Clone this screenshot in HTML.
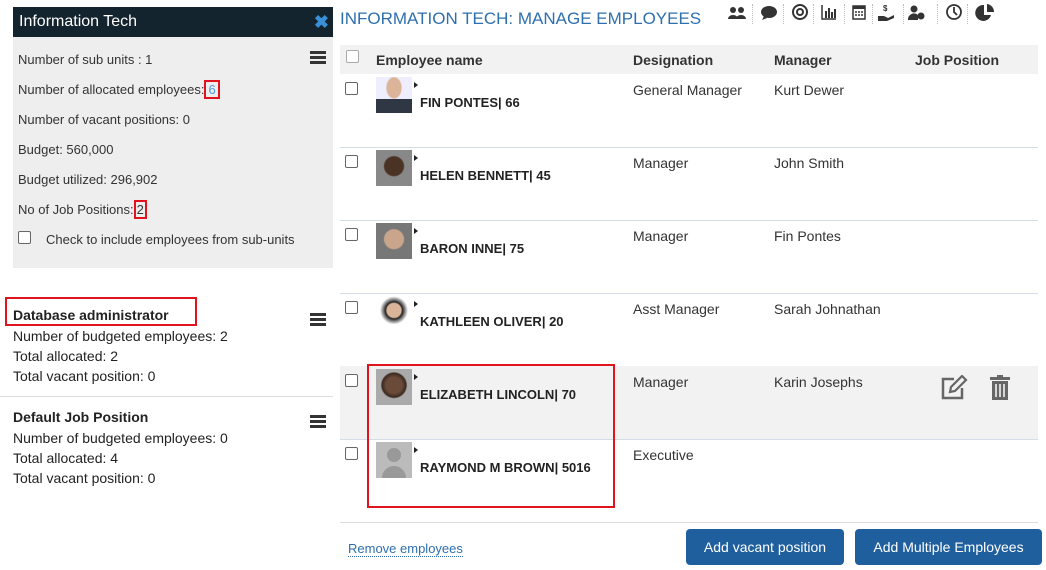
<!DOCTYPE html>
<html><head><style>
body{margin:0;width:1046px;height:570px;background:#fff;font-family:"Liberation Sans",sans-serif;color:#333;position:relative;overflow:hidden}
.a{position:absolute}
.lp{left:13px;top:7px;width:320px;height:261px;background:#eee}
.hd{left:13px;top:7px;width:320px;height:30px;background:#13242e;color:#fff;font-size:16px;line-height:30px}
.li{left:18px;font-size:13px;color:#333}
.box{border:2px solid #e0141e}
.bm{width:16px;height:3px;background:#333;box-shadow:0 5px #333,0 10px #333}
.jp{left:13px;font-size:14px;color:#222}
.th{left:340px;top:45px;width:698px;height:29px;background:#f2f2f2;font-weight:bold;font-size:14px;color:#333}
.row{left:340px;width:698px;height:73px;border-bottom:1px solid #d5dde8}
.cb{width:11px;height:11px;border:1px solid #666;border-radius:2px;background:#fff}
.nm{font-weight:bold;font-size:13px;color:#222}
.c{font-size:14px;color:#333}
.btn{top:529px;height:36px;background:#1f5f9e;color:#fff;font-size:14px;line-height:36px;text-align:center;border-radius:4px}
.ph{width:36px;height:36px}
.tri{width:0;height:0;border-left:4px solid #222;border-top:3px solid transparent;border-bottom:3px solid transparent}
.sep{top:4px;width:0;height:20px;border-left:1px dotted #bbb}
</style></head><body>
<div class="a lp"></div>
<div class="a hd"><span style="margin-left:6px">Information Tech</span><span style="position:absolute;right:4px;top:0;color:#3a8fd6;font-weight:bold;font-size:18px">✖</span></div>
<div class="a bm" style="left:310px;top:51px"></div>
<div class="a li" style="top:52px">Number of sub units : 1</div>
<div class="a li" style="top:82px">Number of allocated employees:<span class="box" style="color:#4a9ad8;padding:0 2px">6</span></div>
<div class="a li" style="top:112px">Number of vacant positions: 0</div>
<div class="a li" style="top:142px">Budget: 560,000</div>
<div class="a li" style="top:172px">Budget utilized: 296,902</div>
<div class="a li" style="top:202px">No of Job Positions:<span class="box" style="padding:0 1px">2</span></div>
<div class="a cb" style="left:18px;top:231px"></div>
<div class="a li" style="left:46px;top:232px">Check to include employees from sub-units</div>

<div class="a box" style="left:5px;top:297px;width:188px;height:25px"></div>
<div class="a jp" style="top:307px;font-weight:bold">Database administrator</div>
<div class="a bm" style="left:310px;top:313px"></div>
<div class="a jp" style="top:328px">Number of budgeted employees: 2</div>
<div class="a jp" style="top:348px">Total allocated: 2</div>
<div class="a jp" style="top:368px">Total vacant position: 0</div>
<div class="a" style="left:0;top:396px;width:333px;height:1px;background:#ddd"></div>
<div class="a jp" style="top:409px;font-weight:bold">Default Job Position</div>
<div class="a bm" style="left:310px;top:415px"></div>
<div class="a jp" style="top:430px">Number of budgeted employees: 0</div>
<div class="a jp" style="top:450px">Total allocated: 4</div>
<div class="a jp" style="top:470px">Total vacant position: 0</div>

<div class="a" style="left:340px;top:9px;font-size:17px;color:#2e6fae">INFORMATION TECH: MANAGE EMPLOYEES</div>
<svg class="a" style="left:726px;top:2px" width="270" height="24" viewBox="0 0 270 24" fill="#333">
<circle cx="7" cy="8" r="3"/><circle cx="15" cy="8" r="3"/><path d="M2 17a5 4 0 0 1 10 0zM10 17a5 4 0 0 1 10 0z"/>
<ellipse cx="43" cy="10" rx="8" ry="6"/><path d="M38 14l-2 4 5-2z"/>
<circle cx="74" cy="10" r="7" fill="none" stroke="#333" stroke-width="2"/><circle cx="74" cy="10" r="3" fill="none" stroke="#333" stroke-width="2"/>
<path d="M96 3v14h14" fill="none" stroke="#333" stroke-width="1.5"/><rect x="99" y="9" width="2" height="7"/><rect x="102" y="6" width="2" height="10"/><rect x="105" y="10" width="2" height="6"/><rect x="108" y="7" width="2" height="9"/>
<rect x="127" y="4" width="12" height="13" fill="none" stroke="#333" stroke-width="1.5"/><rect x="127" y="4" width="12" height="3"/><path d="M129 10h2M132 10h2M135 10h2M129 13h2M132 13h2M135 13h2" stroke="#333" stroke-width="1.5"/>
<text x="157" y="9" font-size="8" font-weight="bold" font-family="Liberation Sans">$</text><path d="M152 14h6l4 2 6-3v3l-7 3h-9z"/>
<circle cx="188" cy="7" r="3.5"/><path d="M182 18a6 6 0 0 1 10-5v5z"/><circle cx="195" cy="14" r="3.5"/>
<circle cx="228" cy="10" r="7" fill="none" stroke="#333" stroke-width="1.8"/><path d="M228 5v5l3 3" fill="none" stroke="#333" stroke-width="1.8"/>
<path d="M258 3a8 8 0 1 0 7 10h-7z"/><path d="M261 2v8h7a8 8 0 0 0-7-8z"/>
</svg>
<div class="a sep" style="left:752px"></div><div class="a sep" style="left:783px"></div><div class="a sep" style="left:813px"></div><div class="a sep" style="left:844px"></div><div class="a sep" style="left:872px"></div><div class="a sep" style="left:903px"></div><div class="a sep" style="left:937px"></div><div class="a sep" style="left:967px"></div>

<div class="a th"><div class="a cb" style="left:6px;top:5px;border-color:#aaa"></div><span class="a" style="left:36px;top:7px">Employee name</span><span class="a" style="left:293px;top:7px">Designation</span><span class="a" style="left:434px;top:7px">Manager</span><span class="a" style="left:575px;top:7px">Job Position</span></div>

<div class="a row" style="top:74px"></div>
<div class="a row" style="top:147px"></div>
<div class="a row" style="top:220px"></div>
<div class="a row" style="top:293px"></div>
<div class="a row" style="top:366px;background:#f2f2f2"></div>
<div class="a row" style="top:439px;height:83px;border-bottom:1px solid #ddd"></div>

<div class="a cb" style="left:345px;top:82px"></div><div class="a ph" style="left:376px;top:77px;background:radial-gradient(ellipse at 50% 30%,#dcb49a 28%,#eef 32%),#eef"><div style="position:absolute;bottom:0;left:0;width:36px;height:14px;background:#2f3745"></div></div><div class="a tri" style="left:414px;top:82px"></div><div class="a nm" style="left:420px;top:95px">FIN PONTES| 66</div><div class="a c" style="left:633px;top:82px">General Manager</div><div class="a c" style="left:774px;top:82px">Kurt Dewer</div>
<div class="a cb" style="left:345px;top:155px"></div><div class="a ph" style="left:376px;top:150px;background:radial-gradient(circle at 50% 45%,#4a3225 35%,#888 40%)"></div><div class="a tri" style="left:414px;top:155px"></div><div class="a nm" style="left:420px;top:168px">HELEN BENNETT| 45</div><div class="a c" style="left:633px;top:155px">Manager</div><div class="a c" style="left:774px;top:155px">John Smith</div>
<div class="a cb" style="left:345px;top:228px"></div><div class="a ph" style="left:376px;top:223px;background:radial-gradient(circle at 50% 45%,#c9a58c 35%,#777 40%)"></div><div class="a tri" style="left:414px;top:228px"></div><div class="a nm" style="left:420px;top:241px">BARON INNE| 75</div><div class="a c" style="left:633px;top:228px">Manager</div><div class="a c" style="left:774px;top:228px">Fin Pontes</div>
<div class="a cb" style="left:345px;top:301px"></div><div class="a ph" style="left:376px;top:296px;background:radial-gradient(circle at 50% 40%,#d9b498 25%,#222 30%,#fff 50%)"></div><div class="a tri" style="left:414px;top:301px"></div><div class="a nm" style="left:420px;top:314px">KATHLEEN OLIVER| 20</div><div class="a c" style="left:633px;top:301px">Asst Manager</div><div class="a c" style="left:774px;top:301px">Sarah Johnathan</div>
<div class="a cb" style="left:345px;top:374px"></div><div class="a ph" style="left:376px;top:369px;background:radial-gradient(circle at 50% 45%,#6a4a38 30%,#3a2a20 45%,#aaa 50%)"></div><div class="a tri" style="left:414px;top:374px"></div><div class="a nm" style="left:420px;top:387px">ELIZABETH LINCOLN| 70</div><div class="a c" style="left:633px;top:374px">Manager</div><div class="a c" style="left:774px;top:374px">Karin Josephs</div>
<svg class="a" style="left:940px;top:375px" width="28" height="26" viewBox="0 0 28 26"><path d="M14 4H3v19h19V13" fill="none" stroke="#666" stroke-width="2.5"/><path d="M10 17l1-5L22 1l4 4-11 11z" fill="none" stroke="#666" stroke-width="2.2"/></svg>
<svg class="a" style="left:989px;top:375px" width="22" height="26" viewBox="0 0 22 26"><rect x="1" y="2" width="20" height="3" fill="#666"/><rect x="8" y="0" width="6" height="3" fill="#666"/><path d="M3 6h16v19H3z" fill="#666"/><path d="M7 9v13M11 9v13M15 9v13" stroke="#f2f2f2" stroke-width="1.6"/></svg>
<div class="a cb" style="left:345px;top:447px"></div><div class="a ph" style="left:376px;top:442px;background:#bbb"><svg width="36" height="36"><circle cx="18" cy="13" r="7" fill="#999"/><path d="M6 36a12 12 0 0 1 24 0z" fill="#999"/></svg></div><div class="a tri" style="left:414px;top:447px"></div><div class="a nm" style="left:420px;top:460px">RAYMOND M BROWN| 5016</div><div class="a c" style="left:633px;top:447px">Executive</div>

<div class="a box" style="left:367px;top:364px;width:244px;height:140px"></div>

<div class="a" style="left:348px;top:541px;font-size:13px;color:#2e6fae;border-bottom:1px dotted #2e6fae">Remove employees</div>
<div class="a btn" style="left:686px;width:158px">Add vacant position</div>
<div class="a btn" style="left:855px;width:187px">Add Multiple Employees</div>
</body></html>
